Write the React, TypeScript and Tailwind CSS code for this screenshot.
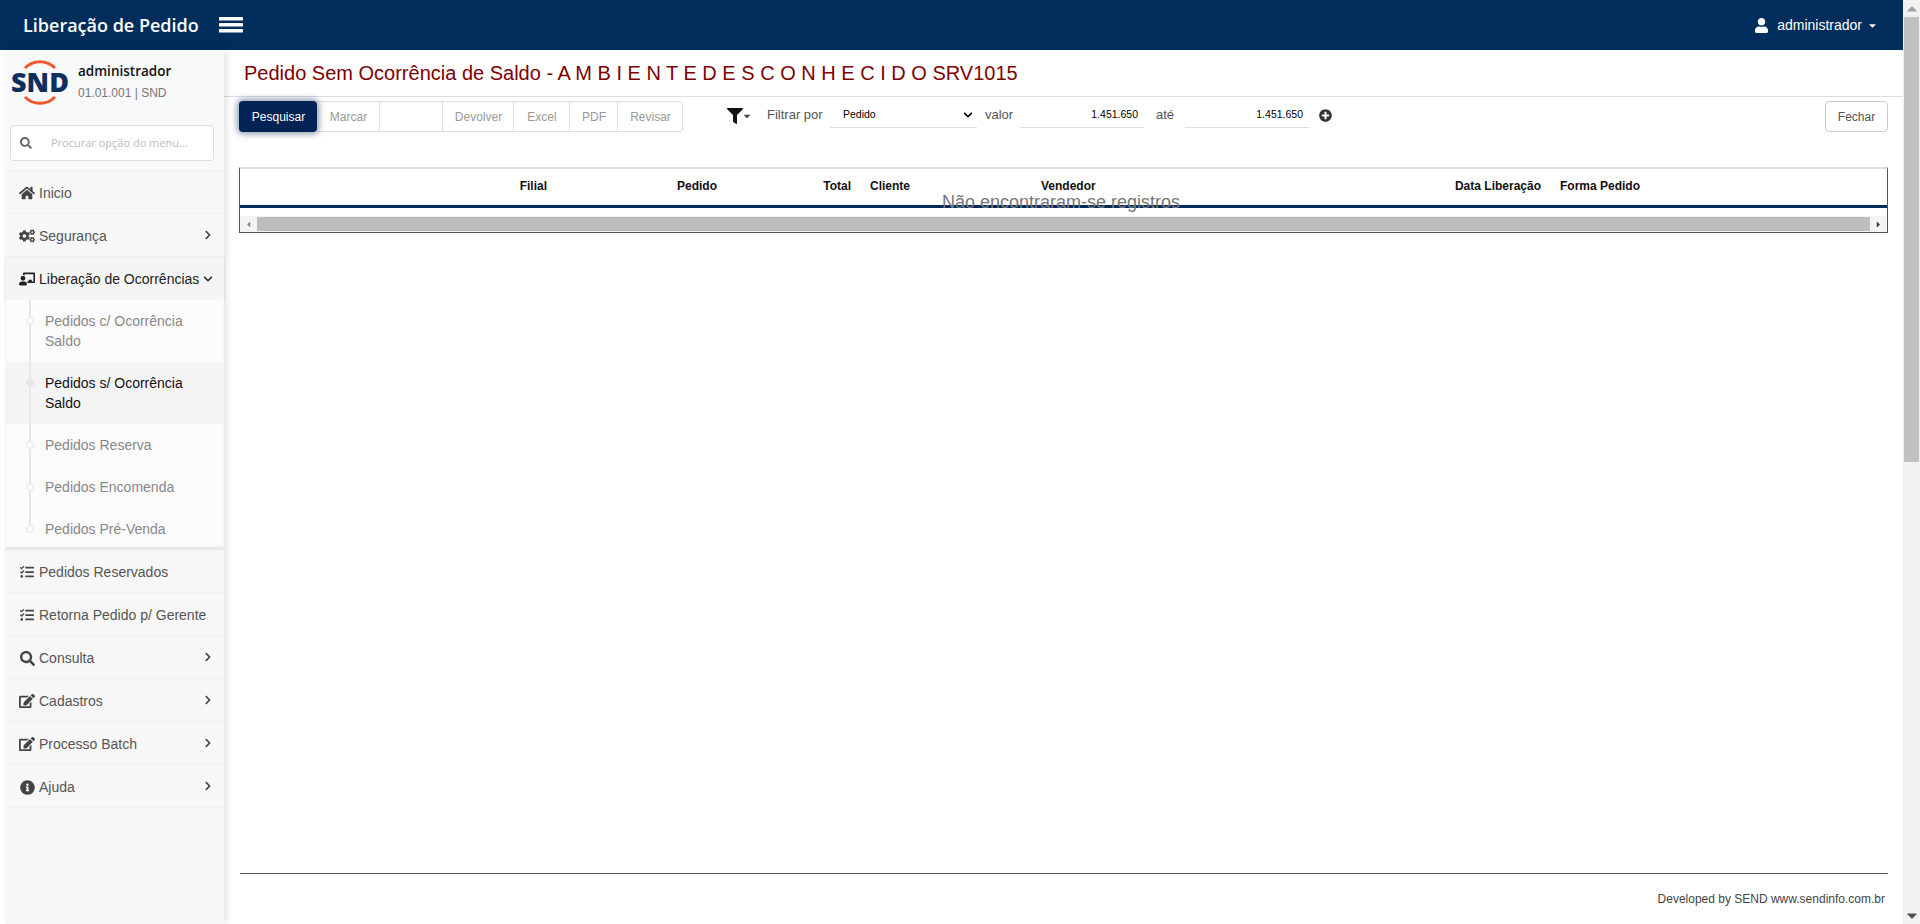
import React from "react";
import {
  FaHome, FaCogs, FaSearch, FaEdit, FaInfoCircle, FaTasks, FaChevronRight, FaChevronDown,
  FaUser, FaFilter, FaPlusCircle, FaChalkboardTeacher, FaCaretDown, FaCaretUp, FaCaretLeft, FaCaretRight,
} from "react-icons/fa";

function Logo() {
  return (
    <svg width="60" height="46" viewBox="0 0 60 46" className="shrink-0">
      <path d="M15 8 A 21 21 0 0 1 45 8" fill="none" stroke="#f0562c" strokeWidth="3" />
      <path d="M15 37 A 21 21 0 0 0 45 37" fill="none" stroke="#f0562c" strokeWidth="3" />
      <text x="30" y="32" textAnchor="middle" fontFamily="'Open Sans', sans-serif" fontWeight="800" fontSize="27" fill="#0e2f5c">SND</text>
    </svg>
  );
}

function MenuRow({ icon, label, arrow }: { icon: React.ReactNode; label: string; arrow?: boolean }) {
  return (
    <div className="h-[43px] pt-[2px] flex items-center pl-[10px] pr-[11px] border-b border-[#f1f1f1] text-[14px] text-[#555]">
      <span className="w-[24px] flex items-center justify-center text-[#444] text-[16px] shrink-0">{icon}</span>
      <span className="flex-1 whitespace-nowrap">{label}</span>
      {arrow && <FaChevronRight className="text-[10px] text-[#444] mt-[-2px]" />}
    </div>
  );
}

function SubRow({ label, active, tall, end }: { label: string; active?: boolean; tall?: boolean; end?: boolean }) {
  return (
    <div className={`relative pl-[39px] pr-[20px] flex items-center text-[14px] leading-[20px] ${tall ? "h-[62px]" : "h-[42px]"} ${active ? "bg-[#f4f4f4] text-[#111]" : "text-[#888]"}`}>
      <span className={`absolute left-[23px] top-0 w-[2px] bg-[#e6e6e6] ${end ? "h-[22px]" : "bottom-0"}`} />
      <span className={`absolute left-[20px] top-[17px] w-[8px] h-[8px] rounded-full border border-[#e6e6e6] ${active ? "bg-[#e6e6e6]" : "bg-[#fbfbfb]"}`} />
      <span>{label}</span>
    </div>
  );
}

function TBtn({ label, w, last }: { label: string; w: string; last?: boolean }) {
  return (
    <div className={`${w} h-[31px] pl-[1px] flex items-center justify-center border-y border-r border-[#ddd] text-[12px] text-[#999] ${last ? "rounded-r-[4px]" : ""}`}>{label}</div>
  );
}

function Sidebar() {
  return (
    <aside className="ml-[5px] w-[219px] shrink-0 bg-[#f7f7f7] shadow-[3px_0_6px_rgba(0,0,0,0.1)] z-10 flex flex-col">
      <div className="h-[121px] bg-[#f8f9fb] border-b border-[#f0f0f0] pt-[10px] pl-[5px] pr-[10px] flex flex-col">
        <div className="flex items-start gap-[8px] h-[46px]">
          <Logo />
          <div>
            <div className="font-['Open_Sans',sans-serif] font-semibold text-[13.5px] leading-[18px] text-[#111] mt-[2px]">administrador</div>
            <div className="text-[12px] leading-[16px] text-[#777] mt-[5px]">01.01.001 | SND</div>
          </div>
        </div>
        <div className="mt-[19px] h-[36px] w-[204px] bg-white border border-[#ddd] rounded-[3px] flex items-center">
          <FaSearch className="ml-[9px] text-[12px] text-[#666] shrink-0" />
          <input
            readOnly
            placeholder="Procurar opção do menu..."
            className="ml-[19px] w-[160px] outline-none bg-transparent font-['Open_Sans',sans-serif] text-[11px] placeholder:text-[#bbb]"
          />
        </div>
      </div>
      <MenuRow icon={<FaHome />} label="Inicio" />
      <MenuRow icon={<FaCogs />} label="Segurança" arrow />
      <div className="h-[43px] pt-[1px] flex items-center pl-[10px] pr-[11px] bg-[#f5f5f5] shadow-[0_1px_2px_rgba(0,0,0,0.15)] relative text-[14px] text-[#222]">
        <span className="w-[24px] flex items-center justify-center text-[#222] text-[16px] shrink-0"><FaChalkboardTeacher /></span>
        <span className="flex-1 whitespace-nowrap">Liberação de Ocorrências</span>
        <FaChevronDown className="text-[10px] text-[#333]" />
      </div>
      <div className="relative bg-[#fbfbfb] pl-[1px] h-[250px] shadow-[inset_0_-3px_2px_#e6e6e6]">
        <SubRow label="Pedidos c/ Ocorrência Saldo" tall />
        <SubRow label="Pedidos s/ Ocorrência Saldo" tall active />
        <SubRow label="Pedidos Reserva" />
        <SubRow label="Pedidos Encomenda" />
        <SubRow label="Pedidos Pré-Venda" end />
      </div>
      <MenuRow icon={<FaTasks className="text-[14px]" />} label="Pedidos Reservados" />
      <MenuRow icon={<FaTasks className="text-[14px]" />} label="Retorna Pedido p/ Gerente" />
      <MenuRow icon={<FaSearch className="text-[15px]" />} label="Consulta" arrow />
      <MenuRow icon={<FaEdit />} label="Cadastros" arrow />
      <MenuRow icon={<FaEdit />} label="Processo Batch" arrow />
      <MenuRow icon={<FaInfoCircle className="text-[15px]" />} label="Ajuda" arrow />
    </aside>
  );
}

function Toolbar() {
  const label = "mt-[6px] text-[13px] leading-[16px] text-[#555]";
  const under = "h-[27px] pt-[1px] border-b border-[#ddd] flex items-center text-[10.5px] text-[#000]";
  return (
    <div className="flex items-start pl-[15px] pr-[15px] pt-[4px] h-[70px]">
      <div className="w-[78px] h-[31px] pl-[1px] rounded-[4px] bg-[#002255] text-white text-[12px] flex items-center justify-center shadow-[0_0_6px_2px_rgba(0,34,85,0.45)] relative">Pesquisar</div>
      <TBtn label="Marcar" w="w-[63px]" />
      <TBtn label="" w="w-[63px]" />
      <TBtn label="Devolver" w="w-[71px]" />
      <TBtn label="Excel" w="w-[56px]" />
      <TBtn label="PDF" w="w-[48px]" />
      <TBtn label="Revisar" w="w-[65px]" last />
      <div className="ml-[44px] mt-[7px] flex items-center text-[#111] w-[24px]">
        <FaFilter className="text-[16px] shrink-0" />
        <FaCaretDown className="text-[10px] ml-[-1px] shrink-0 text-[#444]" />
      </div>
      <span className={`ml-[16px] w-[63px] ${label}`}>Filtrar por</span>
      <div className={`w-[147px] justify-between pl-[13px] pr-[4px] ${under}`}>
        <span>Pedido</span>
        <FaChevronDown className="text-[10px]" />
      </div>
      <span className={`ml-[8px] w-[35px] ${label}`}>valor</span>
      <div className={`w-[124px] justify-end pr-[6px] ${under}`}>1.451.650</div>
      <span className={`ml-[12px] w-[29px] ${label}`}>até</span>
      <div className={`w-[124px] justify-end pr-[6px] ${under}`}>1.451.650</div>
      <FaPlusCircle className="ml-[10px] mt-[8px] text-[13px] text-[#333]" />
      <div className="ml-auto w-[63px] h-[31px] border border-[#ccc] rounded-[4px] text-[12px] text-[#555] flex items-center justify-center">Fechar</div>
    </div>
  );
}

function DataTable() {
  const h = "text-[12px] font-bold text-[#111]";
  return (
    <div className="relative mx-[15px] h-[66px] border-x border-b border-[#555] border-t-2 border-t-[#ddd]">
      <div className="h-[39px] pb-[2px] flex items-center border-b-[3px] border-[#002a5c]">
        <div className={`${h} w-[315px] pr-[8px] text-right`}>Filial</div>
        <div className={`${h} w-[170px] pr-[8px] text-right`}>Pedido</div>
        <div className={`${h} w-[134px] pr-[8px] text-right`}>Total</div>
        <div className={`${h} w-[174px] pl-[11px]`}>Cliente</div>
        <div className={`${h} w-[383px] pl-[8px]`}>Vendedor</div>
        <div className={`${h} w-[125px] text-right`}>Data Liberação</div>
        <div className={`${h} pl-[19px]`}>Forma Pedido</div>
      </div>
      <div className="mt-[8px] h-[16px] bg-[#f3f3f3] flex items-center">
        <FaCaretLeft className="w-[17px] text-[9px] text-[#888] shrink-0" />
        <div className="flex-1 h-[14px] bg-[#bdbdbd]" />
        <FaCaretRight className="w-[17px] text-[9px] text-[#333] shrink-0" />
      </div>
      <span className="absolute left-[702px] top-[22px] text-[18px] leading-[22px] text-[#777] whitespace-nowrap">Não encontraram-se registros</span>
    </div>
  );
}

export default function App() {
  return (
    <div className="h-[924px] w-[1920px] flex overflow-hidden bg-white font-['Liberation_Sans',Arial,sans-serif]">
      <div className="flex-1 flex flex-col min-w-0">
        <header className="h-[50px] shrink-0 bg-[#002d5b] flex items-center pl-[23px] pr-[25px] text-white">
          <span className="font-['Open_Sans',sans-serif] font-semibold text-[18px]">Liberação de Pedido</span>
          <svg width="24" height="16" viewBox="0 0 24 16" className="ml-[20px]" fill="#fff">
            <rect x="0" y="0" width="24" height="3.6" rx="0.6" />
            <rect x="0" y="6" width="24" height="3.6" rx="0.6" />
            <rect x="0" y="12" width="24" height="3.6" rx="0.6" />
          </svg>
          <div className="ml-auto flex items-center text-[14px]">
            <FaUser className="text-[15px] mr-[8px]" />
            <span>administrador</span>
            <FaCaretDown className="ml-[5px] text-[11px]" />
          </div>
        </header>
        <div className="flex-1 flex min-h-0">
          <Sidebar />
          <main className="flex-1 min-w-0 flex flex-col">
            <div className="h-[47px] shrink-0 border-b border-[#ddd] pl-[20px] flex items-center text-[20px] text-[#800000] whitespace-nowrap">
              Pedido Sem Ocorrência de Saldo - A M B I E N T E D E S C O N H E C I D O SRV1015
            </div>
            <Toolbar />
            <DataTable />
            <div className="flex-1" />
            <div className="ml-[16px] mr-[15px] h-[51px] border-t border-[#555] flex items-center justify-end pr-[3px] text-[12px] text-[#444]">
              Developed by SEND www.sendinfo.com.br
            </div>
          </main>
        </div>
      </div>
      <div className="w-[17px] shrink-0 bg-[#f1f1f1] flex flex-col items-center">
        <FaCaretUp className="h-[17px] text-[10px] text-[#a3a3a3] shrink-0" />
        <div className="w-[15px] h-[445px] bg-[#c1c1c1]" />
        <div className="flex-1" />
        <FaCaretDown className="h-[17px] text-[10px] text-[#505050] shrink-0" />
      </div>
    </div>
  );
}
